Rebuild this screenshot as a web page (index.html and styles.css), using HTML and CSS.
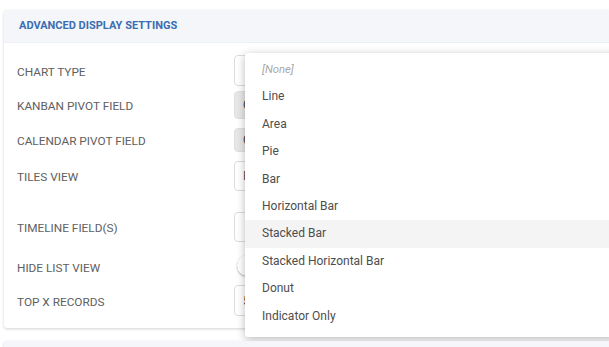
FILE: index.html
```html
<!DOCTYPE html>
<html lang="en">
  <head>
    <meta charset="UTF-8">
    <title>Advanced display settings</title>
    <link rel="stylesheet" href="styles.css">
  </head>
  <body>
    <div class="page">
      <div class="card">
        <div class="card-header">ADVANCED DISPLAY SETTINGS</div>
        <div class="card-body">
          <div class="row row-chart">
            <div class="label">CHART TYPE</div>
            <div class="field input"></div>
          </div>
          <div class="row row-kanban">
            <div class="label">KANBAN PIVOT FIELD</div>
            <div class="field select">C</div>
          </div>
          <div class="row row-calendar">
            <div class="label">CALENDAR PIVOT FIELD</div>
            <div class="field select">C</div>
          </div>
          <div class="row row-tiles">
            <div class="label">TILES VIEW</div>
            <div class="field input">I</div>
          </div>
          <div class="row row-timeline">
            <div class="label">TIMELINE FIELD(S)</div>
            <div class="field input"></div>
          </div>
          <div class="row row-hide">
            <div class="label">HIDE LIST VIEW</div>
            <div class="toggle"><span class="knob"></span></div>
          </div>
          <div class="row row-top">
            <div class="label">TOP X RECORDS</div>
            <div class="field input">5</div>
          </div>
        </div>

        <ul class="dropdown">
          <li class="none">[None]</li>
          <li>Line</li>
          <li>Area</li>
          <li>Pie</li>
          <li>Bar</li>
          <li>Horizontal Bar</li>
          <li class="hover">Stacked Bar</li>
          <li>Stacked Horizontal Bar</li>
          <li>Donut</li>
          <li>Indicator Only</li>
        </ul>
      </div>

      <div class="card next"></div>
    </div>
  </body>
</html>
```

FILE: styles.css
```css
body{
  margin: 0;
  background: #fff;
  font-family: Roboto, "Liberation Sans", sans-serif;
  overflow: hidden;
}

.page{
  padding: 10px 0 0 4px;
}

.card{
  position: relative;
  background: #fff;
  border-radius: 3px 0 0 3px;
  box-shadow: 0 1px 3px rgba(0,0,0,0.18);
}

.card-header{
  height: 32px;
  line-height: 32px;
  padding-left: 15px;
  background: #f4f6f9;
  border-bottom: 1px solid #eceff3;
  color: #3b6db2;
  font-size: 11px;
  font-weight: bold;
}

.card-body{
  padding: 12px 0 12px 13px;
}

/* each row is as tall as its control, label centred a hair low */
.row{
  display: flex;
  align-items: stretch;
}

.row-chart{ height: 31px; margin-bottom: 5px; }
.row-kanban{ height: 28px; margin-bottom: 9px; }
.row-calendar{ height: 24px; margin-bottom: 9px; }
.row-tiles{ height: 30px; margin-bottom: 21px; }
.row-timeline{ height: 30px; margin-bottom: 13px; }
.row-hide{ height: 26px; margin-bottom: 4px; }
.row-top{ height: 31px; }

.label{
  width: 217px;
  padding-top: 2px;
  display: flex;
  align-items: center;
  font-size: 11.8px;
  color: #606060;
}

.row-hide .label{
  padding-top: 0;
}

.field{
  flex: 1;
  box-sizing: border-box;
  border-radius: 4px;
  padding-left: 8px;
  font-size: 12px;
  color: #444;
  display: flex;
  align-items: center;
}

.input{
  border: 1px solid #dcdcdc;
  background: #fff;
}

.select{
  background: #e7e7e7;
  border: 1px solid #e0e0e0;
}

.toggle{
  align-self: flex-start;
  width: 40px;
  height: 21px;
  margin-left: 3px;
  border-radius: 11px;
  background: #e4e4e4;
  position: relative;
}

.toggle .knob{
  position: absolute;
  left: 0;
  top: 0;
  width: 21px;
  height: 21px;
  border-radius: 50%;
  background: #fff;
  box-shadow: 0 1px 2px rgba(0,0,0,0.3);
}

.dropdown{
  position: absolute;
  left: 241px;
  top: 43px;
  right: -10px;
  margin: 0;
  padding: 3px 0 7px 0;
  list-style: none;
  background: #fff;
  border-radius: 3px;
  box-shadow: 0 2px 8px rgba(0,0,0,0.28);
}

.dropdown li{
  height: 27.4px;
  line-height: 27.4px;
  padding-left: 17px;
  font-size: 12px;
  color: #4d4d4d;
}

.dropdown li.none{
  color: #a8a8a8;
  font-style: italic;
  font-size: 11.3px;
}

.dropdown li.hover{
  background: #f4f4f4;
}

.card.next{
  margin-top: 13px;
  height: 30px;
  background: #f4f6f9;
}
```
